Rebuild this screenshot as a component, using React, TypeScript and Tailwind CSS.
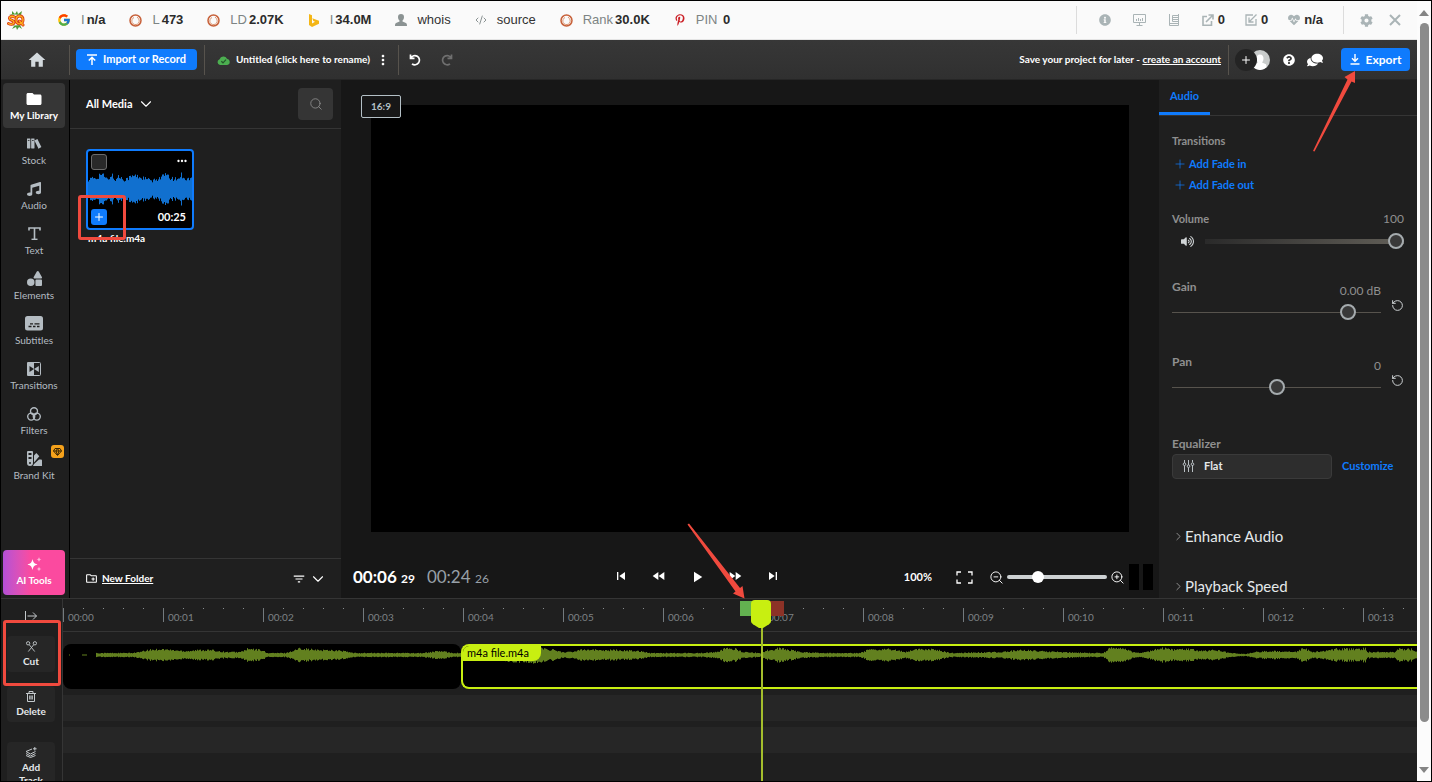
import clsx from 'clsx'
import {
  ChevronDown,
  ChevronRight,
  CodeXml,
  Plus,
  RotateCcw,
  Search,
  ZoomIn,
  ZoomOut,
} from 'lucide-react'
import { ReactNode, useState } from 'react'
import {
  FaCog,
  FaComments,
  FaHeartbeat,
  FaInfoCircle,
  FaMusic,
  FaPinterestP,
  FaQuestionCircle,
  FaShapes,
  FaVolumeUp,
} from 'react-icons/fa'
import { FcGoogle } from 'react-icons/fc'
import { ImBooks } from 'react-icons/im'
import {
  MdFastForward,
  MdFastRewind,
  MdFilterList,
  MdFolder,
  MdHome,
  MdMoreHoriz,
  MdMoreVert,
  MdOutlineCreateNewFolder,
  MdPlayArrow,
  MdSkipNext,
  MdSkipPrevious,
} from 'react-icons/md'

type IconProps = { className?: string }

/* ---------- icons ---------- */

const SeoLogo = () => (
  <svg viewBox="0 0 18 20" className="h-5 w-[18px]">
    <path
      d="M2 4l3 1 0-4 3 3 2-3 1 3 4-3-1 4zM3 16l4 0-2 3 4-2 1 3 2-3 3 2-2-4z"
      fill="#4f9a34"
    />
    <g fill="none" strokeLinecap="round">
      <path
        d="M7.500 7C5 5.500 2.200 6.500 2.500 8.500c.3 2 4.500 1.500 4.500 3.700 0 2-3 2.800-5.500 1.300M13 6c-3 0-4 2-4 4s1.500 3.800 3.500 3.800S16 12 16 10s-1-4-3-4zM12.500 11l3.500 4"
        stroke="#d93b16"
        strokeWidth="3"
      />
      <path
        d="M7.500 7C5 5.500 2.200 6.500 2.500 8.500c.3 2 4.500 1.500 4.500 3.700 0 2-3 2.800-5.500 1.300M13 6c-3 0-4 2-4 4s1.500 3.800 3.500 3.800S16 12 16 10s-1-4-3-4zM12.500 11l3.500 4"
        stroke="#ffb21c"
        strokeWidth="1.300"
      />
    </g>
  </svg>
)

const RingIcon = () => (
  <svg viewBox="0 0 13 13" className="size-[13px]" fill="none">
    <circle cx="6.500" cy="6.500" r="5.500" stroke="#c7613a" strokeWidth="1.500" />
    <path d="M5 3.500a3.700 3.700 0 1 0 4.500 1.200L8 3" stroke="#dd9672" strokeWidth="1" />
  </svg>
)

const BingIcon = () => (
  <svg viewBox="0 0 12 13" className="h-[13px] w-3">
    <path d="M1 0l3 1.200v8.300L7 7.800 5.300 7 4.300 4.300 11 6.700v3L4 13l-3-2z" fill="#f4b616" />
  </svg>
)

const PersonIcon = () => (
  <svg viewBox="0 0 12 12" className="size-3" fill="#8b9393">
    <path d="M6 0c2 0 3 1.300 3 3 0 1.600-.8 3-1.500 3.600v1L11 9c.7.400 1 1.300 1 3H0c0-1.700.3-2.600 1-3l3.500-1.400v-1C3.800 6 3 4.600 3 3c0-1.700 1-3 3-3z" />
  </svg>
)

const MonitorIcon = () => (
  <svg viewBox="0 0 13 12" className="h-3 w-[13px]" fill="none" stroke="#aab4b6">
    <path d="M.5.500h12v8H.5zM6.500 8.500v3M3.500 11.500h6M3.500 7V5M5.500 7V4M7.500 7V5M9.500 7V4" />
  </svg>
)

const ReportIcon = () => (
  <svg viewBox="0 0 12 12" className="size-3" fill="none" stroke="#aab4b6">
    <path d="M1.500 0v11.500h9V0M10 1.500H4.500v6H10M5 3.500h5M5 5.500h5M2 9.500h8" />
  </svg>
)

const OutLinkIcon = () => (
  <svg viewBox="0 0 12 12" className="size-3" fill="none" stroke="#aab4b6" strokeWidth="1.600">
    <path d="M5 2.500H1v8.700h8.500V7M4 8l6.500-6.500M6.500 1H11v4.500" />
  </svg>
)

const InLinkIcon = () => (
  <svg viewBox="0 0 12 12" className="size-3" fill="none" stroke="#aab4b6" strokeWidth="1.300">
    <path d="M8 1H1v10h10V5M11.500.500L4.500 7.500M4 3.500V8h4.500" />
  </svg>
)

const CloseIcon = () => (
  <svg viewBox="0 0 12 12" className="size-3" fill="none" stroke="#aab4b6" strokeWidth="2">
    <path d="M1 1l10 10M11 1L1 11" />
  </svg>
)

const ImportIcon = () => (
  <svg viewBox="0 0 10 11" className="h-[11px] w-[10px]" fill="none" stroke="white" strokeWidth="1.500">
    <path d="M0 1h10M5 11V4M1.800 6.500L5 3.300l3.200 3.200" />
  </svg>
)

const ExportIcon = () => (
  <svg viewBox="0 0 10 11" className="h-[11px] w-[10px]" fill="none" stroke="white" strokeWidth="1.400">
    <path d="M.5 10h9M5 0v7M2 4.300l3 3 3-3" />
  </svg>
)

const CloudIcon = () => (
  <svg viewBox="0 0 13 10" className="h-[10px] w-[13px] shrink-0">
    <path d="M3 10a3 3 0 0 1-.4-5.800A4 4 0 0 1 10 3.700 3.200 3.200 0 0 1 10.200 10z" fill="#4caf50" />
    <path d="M4.300 6.200l1.700 1.600 3-3.200" fill="none" stroke="#24572a" strokeWidth="1.200" />
  </svg>
)

const UndoIcon = ({ className }: IconProps) => (
  <svg viewBox="0 0 12 12" className={clsx('size-3', className)} fill="none" stroke="currentColor">
    <path d="M1.500.500v3.800h4M1.800 4A4.600 4.600 0 1 1 3 9.800" strokeWidth="1.700" />
  </svg>
)

const TextIcon = ({ className }: IconProps) => (
  <svg viewBox="0 0 15 15" className={className} fill="none" stroke="currentColor">
    <path d="M2 4.500V2h11v2.500M7.500 2v11" strokeWidth="1.600" />
    <path d="M4.500 13.300h6" strokeWidth="1.400" />
  </svg>
)

const SubtitlesIcon = ({ className }: IconProps) => (
  <svg viewBox="0 0 18 15" className={className}>
    <rect width="18" height="14.500" rx="2.500" fill="currentColor" />
    <path d="M3.500 10.500h3M8 10.500h2.500M12 10.500h2.500M5 7.800h3M9.500 7.800h5" stroke="#1f1f1f" strokeWidth="1.300" />
  </svg>
)

const TransitionsIcon = ({ className }: IconProps) => (
  <svg viewBox="0 0 14 14" className={className}>
    <path d="M0 1a1 1 0 0 1 1-1h6v14H1a1 1 0 0 1-1-1z" fill="currentColor" />
    <path d="M7 .500h5.500a1 1 0 0 1 1 1v11a1 1 0 0 1-1 1H7" fill="none" stroke="currentColor" />
    <path d="M2.500 4L7 7l-4.500 3z" fill="#1f1f1f" />
    <path d="M11.800 4L7 7l4.800 3z" fill="currentColor" />
  </svg>
)

const FiltersIcon = ({ className }: IconProps) => (
  <svg viewBox="0 0 14 14" className={className} fill="none" stroke="currentColor" strokeWidth="1.400">
    <circle cx="7" cy="4.300" r="3.500" />
    <circle cx="4.200" cy="9.600" r="3.500" />
    <circle cx="9.800" cy="9.600" r="3.500" />
  </svg>
)

const BrandKitIcon = ({ className }: IconProps) => (
  <svg viewBox="0 0 15 15" className={className} fill="currentColor">
    <path
      fillRule="evenodd"
      d="M1 0h4a1 1 0 0 1 1 1v11a2.500 2.500 0 0 1-6 0V1a1 1 0 0 1 1-1zm.500 2v2h3V2zm0 4v2h3V6zm1.500 5a1 1 0 1 0 0 2 1 1 0 0 0 0-2z"
    />
    <path d="M7 4.500L9.300 2l3 3.200L7 11.500zM7 13l5-4.500h2a1 1 0 0 1 1 1V15H6z" />
  </svg>
)

const SparkleIcon = ({ className }: IconProps) => (
  <svg viewBox="0 0 15 15" className={className} fill="white">
    <path d="M5.500 2c.9 3.600 1.500 4.400 5 5.500-3.500 1.100-4.100 1.900-5 5.500-.9-3.600-1.500-4.400-5-5.500 3.500-1.100 4.100-1.900 5-5.500z" />
    <path
      d="M12 0c.4 1.700.8 2.100 2.500 2.500-1.700.4-2.100.8-2.500 2.500-.4-1.700-.8-2.100-2.500-2.500C11.200 2.100 11.600 1.700 12 0zM12 9.500c.4 1.700.8 2.100 2.500 2.500-1.700.4-2.100.8-2.500 2.500-.4-1.700-.8-2.100-2.500-2.500 1.700-.4 2.100-.8 2.500-2.500z"
      opacity="0.600"
    />
  </svg>
)

const GemIcon = () => (
  <svg viewBox="0 0 9 8" className="h-2 w-[9px]" fill="none" stroke="#3b2500">
    <path d="M2 .500h5L8.500 3l-4 4.500-4-4.500zM.500 3h8M4.500.500L3 3l1.500 4L6 3z" />
  </svg>
)

const FullscreenIcon = () => (
  <svg viewBox="0 0 17 13" className="h-[13px] w-[17px]" fill="none" stroke="white" strokeWidth="1.300">
    <path d="M5 1H1v3.500M12 1h4v3.500M16 8.500V12h-4M5 12H1V8.500" />
  </svg>
)

const MixerIcon = ({ className }: IconProps) => (
  <svg viewBox="0 0 13 12" className={className} fill="none" stroke="#b9c0c4">
    <path d="M2.500 0v3M2.500 5.500V12M6.500 0v5M6.500 7.500V12M10.500 0v2.500M10.500 5V12" />
    <circle cx="2.500" cy="4.200" r="1.300" />
    <circle cx="6.500" cy="6.200" r="1.300" />
    <circle cx="10.500" cy="4.200" r="1.300" />
  </svg>
)

const ExpandIcon = () => (
  <svg viewBox="0 0 12 10" className="h-[10px] w-3" fill="none" stroke="#c4c9cc">
    <path d="M.5 0v10M2.500 5h9M8 1.500L11.500 5 8 8.500" />
  </svg>
)

const CutIcon = () => (
  <svg viewBox="0 0 12 12" className="size-[11px]" fill="none" stroke="#c4c9cc">
    <circle cx="2.300" cy="2.500" r="1.800" />
    <circle cx="9.700" cy="2.500" r="1.800" />
    <path d="M3.500 4l6 7.500M8.500 4l-6 7.500" />
  </svg>
)

const TrashIcon = () => (
  <svg viewBox="0 0 10 11" className="h-[11px] w-[10px]" fill="none" stroke="#c4c9cc">
    <path d="M0 2.500h10M3 2.500v-2h4v2M1.500 2.500v8h7v-8M3.700 4.500v4M5 4.500v4M6.300 4.500v4" />
  </svg>
)

const AddTrackIcon = () => (
  <svg viewBox="0 0 12 11" className="h-[11px] w-3" fill="none" stroke="#c4c9cc">
    <path d="M7 2L1 4.500 5.500 7l5-2.500M1 6.500L5.500 9l5-2.500M1 8.500l4.500 2 5-2M9.800 0v3.500M8 1.800h3.600" />
  </svg>
)

/* ---------- waveforms ---------- */

// [x, amplitude] pairs, straight lines in between
const TRACK_ENVELOPE = [
  [32, 0], [33, 2], [67, 2], [77, 3], [85, 5], [97, 6], [108, 5], [122, 4], [137, 5], [147, 5],
  [162, 3], [177, 3], [184, 6], [199, 5], [203, 2], [222, 2], [229, 4], [237, 7], [252, 5], [267, 5],
  [280, 4], [290, 2], [360, 2], [376, 4], [390, 2], [410, 2], [420, 3], [440, 6], [472, 8], [483, 6],
  [492, 5], [498, 3], [510, 3], [517, 6], [535, 5], [552, 5], [577, 4], [587, 2], [637, 2], [655, 3],
  [662, 7], [673, 6], [679, 3], [697, 2], [705, 5], [717, 7], [727, 5], [737, 3], [760, 2], [797, 2],
  [804, 5], [827, 6], [842, 3], [849, 5], [862, 6], [874, 5], [887, 2], [937, 3], [957, 5], [977, 4],
  [997, 3], [1027, 2], [1040, 2], [1047, 7], [1062, 6], [1069, 3], [1077, 2], [1087, 4], [1097, 7],
  [1112, 5], [1127, 6], [1137, 4], [1152, 5], [1167, 2], [1182, 1], [1192, 3], [1207, 4], [1232, 3],
  [1240, 7], [1249, 3], [1262, 4], [1272, 6], [1297, 6], [1302, 7], [1304, 3], [1332, 3], [1335, 6],
  [1349, 6], [1352, 3], [2400, 3],
]

const CARD_ENVELOPE = [
  [0, 10], [9, 12], [12, 16], [16, 13], [20, 9], [23, 16], [26, 9], [30, 13], [36, 10], [46, 14],
  [56, 11], [60, 10], [64, 8], [70, 11], [77, 15], [82, 11], [89, 10], [93, 15], [98, 10], [105, 12],
]

const amplitudeAt = (envelope: number[][], x: number) => {
  const next = envelope.findIndex((point) => point[0] > x)
  if (next <= 0) return 0
  const [x0, a0] = envelope[next - 1]
  const [x1, a1] = envelope[next]
  return a0 + ((a1 - a0) * (x - x0)) / (x1 - x0)
}

const noise = (x: number) => {
  const n = Math.sin(x * 127.1) * 43758.5453
  return n - Math.floor(n)
}

const wavePath = (envelope: number[][], from: number, to: number, mid: number) => {
  let d = ''
  for (let x = from; x < to; x++) {
    const amp = amplitudeAt(envelope, x) * (0.75 + noise(x) * 0.4)
    if (amp > 0) d += `M${x - from + 0.5} ${(mid - amp).toFixed(1)}v${(amp * 2).toFixed(1)}`
  }
  return d
}

/* ---------- browser extension bar ---------- */

interface StatProps {
  icon: ReactNode
  label?: string
  value?: string
  plain?: boolean
}

const Stat = ({ icon, label, value, plain }: StatProps) => (
  <a href="#" className="flex shrink-0 items-center gap-[10px] whitespace-nowrap">
    {icon}
    <span className="flex gap-[2px]">
      {label && <span className={plain ? 'text-[#333]' : 'text-[#7d8484]'}>{label}</span>}
      {value && <b className="text-[#2b2b2b]">{value}</b>}
    </span>
  </a>
)

const SeoBar = () => (
  <div className="flex h-[39px] shrink-0 items-center justify-between border-b border-[#e4e4e4] bg-[#fafafa] pr-4 pl-[6px] font-['Liberation_Sans',Arial,sans-serif] text-[13px]">
    <div className="flex items-center gap-6">
      <span className="mr-2">
        <SeoLogo />
      </span>
      <Stat icon={<FcGoogle size={14} />} label="I" value="n/a" />
      <Stat icon={<RingIcon />} label="L" value="473" />
      <Stat icon={<RingIcon />} label="LD" value="2.07K" />
      <Stat icon={<BingIcon />} label="I" value="34.0M" />
      <Stat icon={<PersonIcon />} label="whois" plain />
      <Stat icon={<CodeXml size={12} color="#8b9393" />} label="source" plain />
      <Stat icon={<RingIcon />} label="Rank" value="30.0K" />
      <Stat icon={<FaPinterestP size={12} color="#cb2027" />} label="PIN" value={'\u00a00'} />
    </div>
    <div className="flex items-center gap-[22px] font-bold text-[#2b2b2b]">
      <span className="h-7 w-px bg-[#dcdcdc]" />
      <button type="button" aria-label="Info">
        <FaInfoCircle size={12} color="#aab4b6" />
      </button>
      <button type="button" aria-label="Diagnosis">
        <MonitorIcon />
      </button>
      <button type="button" aria-label="Density">
        <ReportIcon />
      </button>
      <div className="flex items-center gap-5">
        <a href="#" className="flex items-center gap-1">
          <OutLinkIcon />0
        </a>
        <a href="#" className="flex items-center gap-1">
          <InLinkIcon />0
        </a>
        <a href="#" className="flex items-center gap-1">
          <FaHeartbeat size={12} color="#aab4b6" />
          n/a
        </a>
        <span className="h-7 w-px bg-[#dcdcdc]" />
      </div>
      <div className="-ml-[6px] flex items-center gap-4">
        <button type="button" aria-label="Settings">
          <FaCog size={13} color="#aab4b6" />
        </button>
        <button type="button" aria-label="Close">
          <CloseIcon />
        </button>
      </div>
    </div>
  </div>
)

/* ---------- editor toolbar ---------- */

const Divider = () => <span className="h-[30px] w-px shrink-0 bg-[#57534d]" />

const Toolbar = () => (
  <header className="flex h-10 shrink-0 items-center justify-between border-b border-[#262626] bg-linear-to-b from-[#373737] to-[#303030] pr-[7px] text-[10px] font-bold whitespace-nowrap text-white">
    <div className="flex items-center">
      <button type="button" aria-label="Home" className="flex w-[68px] justify-center pl-1">
        <MdHome size={20} color="#d3d9dd" />
      </button>
      <Divider />
      <button
        type="button"
        className="ml-[6px] flex h-[21px] w-[121px] items-center justify-center gap-[6px] rounded bg-[#0f7bfd] text-[11px]"
      >
        <ImportIcon />
        Import or Record
      </button>
      <span className="ml-[7px] flex">
        <Divider />
      </span>
      <button type="button" className="ml-3 flex w-[154px] items-center gap-[6px]">
        <CloudIcon />
        Untitled (click here to rename)
      </button>
      <button type="button" aria-label="More" className="ml-1">
        <MdMoreVert size={16} />
      </button>
      <span className="ml-[7px] flex">
        <Divider />
      </span>
      <button type="button" aria-label="Undo" className="ml-[10px]">
        <UndoIcon />
      </button>
      <button type="button" aria-label="Redo" className="ml-5 text-[#6f6f6f]">
        <UndoIcon className="-scale-x-100" />
      </button>
    </div>
    <div className="flex items-center">
      <span>
        Save your project for later -{' '}
        <a href="#" className="underline">
          create an account
        </a>
      </span>
      <span className="ml-[7px] flex">
        <Divider />
      </span>
      <button type="button" aria-label="Account" className="ml-[6px] flex items-center">
        <span className="z-10 flex size-[22px] items-center justify-center rounded-full bg-[#242424]">
          <Plus size={12} />
        </span>
        <svg viewBox="0 0 20 20" className="-ml-[7px] size-5">
          <circle cx="10" cy="10" r="10" fill="#c9cccb" />
          <path d="M10 4.500c2.500 0 3.500 1.800 3.500 4 0 2-.8 3.300-1.500 4l3.500 1.500c1 .5 1 1.800.9 3.600a10 10 0 0 1-12.800 0c0-1.800 0-3.100.9-3.600L8 12.500c-.7-.7-1.500-2-1.500-4 0-2.200 1-4 3.500-4z" fill="white" />
        </svg>
      </button>
      <button type="button" aria-label="Help" className="ml-[13px]">
        <FaQuestionCircle size={12} />
      </button>
      <button type="button" aria-label="Chat" className="ml-3">
        <FaComments size={16} className="-scale-x-100 rotate-0" />
      </button>
      <span className="relative ml-[18px]">
        <button
          type="button"
          className="flex h-[23px] w-[69px] items-center justify-center gap-[6px] rounded bg-[#0f7bfd] text-[12px]"
        >
          <ExportIcon />
          Export
        </button>
        <svg
          viewBox="0 0 44 82"
          className="pointer-events-none absolute top-[22px] -left-7 z-20 h-[82px] w-11"
          fill="#f04a3e"
        >
          <path d="M0 81L34.500 9.500 31.500 7 42 1v12l-3.500-1.500L1.500 81.500z" />
        </svg>
      </span>
    </div>
  </header>
)

/* ---------- left side ---------- */

const NAV_ITEMS = [
  { label: 'My Library', icon: <MdFolder size={18} /> },
  { label: 'Stock', icon: <ImBooks size={15} /> },
  { label: 'Audio', icon: <FaMusic size={14} /> },
  { label: 'Text', icon: <TextIcon className="size-[15px]" /> },
  { label: 'Elements', icon: <FaShapes size={15} /> },
  { label: 'Subtitles', icon: <SubtitlesIcon className="h-[15px] w-[18px]" /> },
  { label: 'Transitions', icon: <TransitionsIcon className="size-[14px]" /> },
  { label: 'Filters', icon: <FiltersIcon className="size-[14px]" /> },
  { label: 'Brand Kit', icon: <BrandKitIcon className="size-[15px]" />, premium: true },
]

const Sidebar = () => {
  const [active, setActive] = useState('My Library')

  return (
    <nav className="flex w-[69px] shrink-0 flex-col justify-between border-r border-black pt-[3px] pr-1 pb-[3px] pl-[2px] text-[10px]">
      <div>
        {NAV_ITEMS.map((item) => (
          <button
            key={item.label}
            type="button"
            onClick={() => setActive(item.label)}
            className={clsx(
              'relative flex h-[45px] w-full flex-col items-center justify-center rounded whitespace-nowrap',
              active === item.label
                ? 'bg-[#363636] font-bold text-white'
                : 'text-[#b4bcc2]'
            )}
          >
            <span className="flex h-[18px] items-center">{item.icon}</span>
            <span className="leading-[14px]">{item.label}</span>
            {item.premium && (
              <span className="absolute top-[2px] right-[1px] flex size-[13px] items-center justify-center rounded-[3px] bg-[#f6a21b]">
                <GemIcon />
              </span>
            )}
          </button>
        ))}
      </div>
      <button
        type="button"
        className="flex h-[45px] w-full flex-col items-center justify-center rounded bg-linear-to-r from-[#b44fd6] via-[#fb4a9f] via-45% to-[#fb4a9f] font-bold text-white"
      >
        <SparkleIcon className="size-[15px]" />
        <span className="leading-4">AI Tools</span>
      </button>
    </nav>
  )
}

const MediaCard = () => (
  <div className="w-[108px]">
    <div className="relative flex h-[81px] flex-col justify-between rounded border-2 border-[#0f7bfd] bg-black px-[3px] py-[3px]">
      <svg
        viewBox="0 0 104 34"
        preserveAspectRatio="none"
        className="absolute top-[21px] left-0 h-[34px] w-full"
        stroke="#1170cf"
      >
        <path d={wavePath(CARD_ENVELOPE, 0, 104, 17)} />
      </svg>
      <div className="flex items-start justify-between">
        <input
          type="checkbox"
          aria-label="Select m4a file.m4a"
          className="size-4 appearance-none rounded-[3px] border border-[#6b6b6b] bg-[#292929]"
        />
        <button type="button" aria-label="File menu">
          <MdMoreHoriz size={14} color="white" />
        </button>
      </div>
      <div className="relative flex items-center justify-between pr-[3px]">
        <button
          type="button"
          aria-label="Add to timeline"
          className="flex size-4 items-center justify-center rounded-[3px] bg-[#0f7bfd]"
        >
          <Plus size={12} color="white" />
        </button>
        <span className="text-[11px] font-bold text-white">00:25</span>
      </div>
      <span className="pointer-events-none absolute top-11 -left-[10px] h-[45px] w-12 rounded-[3px] border-3 border-[#f04a3e]" />
    </div>
    <p className="pl-[2px] text-[10px] leading-4 font-bold text-white">m4a file.m4a</p>
  </div>
)

const LibraryPanel = () => (
  <section className="flex w-[271px] shrink-0 flex-col text-white">
    <div className="flex h-[49px] items-center justify-between border-b border-[#353535] pr-2 pl-4">
      <button type="button" className="flex items-center gap-1 text-[11px] font-bold">
        All Media
        <ChevronDown size={18} strokeWidth={1.500} />
      </button>
      <button
        type="button"
        aria-label="Search"
        className="flex h-8 w-[35px] items-center justify-center rounded bg-[#353535] text-[#8b8b8b]"
      >
        <Search size={14} strokeWidth={1.500} />
      </button>
    </div>
    <div className="flex-1 px-4 pt-5">
      <MediaCard />
    </div>
    <div className="flex h-[40px] items-center justify-between border-t border-[#353535] pr-[14px] pl-[15px]">
      <button type="button" className="flex items-center gap-1 text-[10px] font-bold underline">
        <MdOutlineCreateNewFolder size={13} />
        New Folder
      </button>
      <div className="flex items-center gap-[3px]">
        <button type="button" aria-label="Sort">
          <MdFilterList size={14} />
        </button>
        <button type="button" aria-label="Expand">
          <ChevronDown size={18} strokeWidth={1.500} />
        </button>
      </div>
    </div>
  </section>
)

/* ---------- preview ---------- */

const TRANSPORT = [
  { label: 'Skip to start', icon: <MdSkipPrevious size={16} /> },
  { label: 'Rewind', icon: <MdFastRewind size={16} /> },
  { label: 'Play', icon: <MdPlayArrow size={18} /> },
  { label: 'Fast forward', icon: <MdFastForward size={16} /> },
  { label: 'Skip to end', icon: <MdSkipNext size={16} /> },
]

const Preview = () => {
  const [zoom, setZoom] = useState(28)

  return (
    <main className="relative flex min-w-0 flex-1 flex-col bg-[#171717] text-white">
      <div className="mx-[30px] mt-[25px] flex-1 bg-black" />
      <button
        type="button"
        className="absolute top-[15px] left-5 h-[23px] w-10 rounded-[2px] border border-[#b4c0c6] bg-[#171717] text-[10px] font-bold text-[#b4c0c6]"
      >
        16:9
      </button>
      <div className="grid h-[66px] shrink-0 grid-cols-[1fr_auto_1fr] items-center pt-6 whitespace-nowrap">
        <div className="flex items-baseline gap-3 pl-3 text-[17px]">
          <span className="font-bold">
            00:06 <span className="text-[12px]">29</span>
          </span>
          <span className="text-[#98a0a8]">
            00:24 <span className="text-[12px]">26</span>
          </span>
        </div>
        <div className="mr-[106px] flex">
          {TRANSPORT.map((item) => (
            <button
              key={item.label}
              type="button"
              aria-label={item.label}
              className="flex w-[38px] justify-center"
            >
              {item.icon}
            </button>
          ))}
        </div>
        <div className="flex items-center justify-end pr-[6px]">
          <span className="text-[11px] font-bold">100%</span>
          <button type="button" aria-label="Fullscreen" className="ml-6">
            <FullscreenIcon />
          </button>
          <button type="button" aria-label="Zoom out" className="ml-4">
            <ZoomOut size={15} strokeWidth={1.500} />
          </button>
          <input
            type="range"
            aria-label="Timeline zoom"
            value={zoom}
            onChange={(e) => setZoom(Number(e.target.value))}
            className="mx-[3px] h-1 w-[100px] appearance-none rounded-full bg-[#cdd1d3] [&::-webkit-slider-thumb]:size-3 [&::-webkit-slider-thumb]:appearance-none [&::-webkit-slider-thumb]:rounded-full [&::-webkit-slider-thumb]:bg-white"
          />
          <button type="button" aria-label="Zoom in">
            <ZoomIn size={15} strokeWidth={1.500} />
          </button>
          <span className="ml-1 h-[26px] w-[10px] bg-black" />
          <span className="ml-1 h-[26px] w-[10px] bg-black" />
        </div>
      </div>
    </main>
  )
}

/* ---------- properties panel ---------- */

const THUMB =
  '[&::-webkit-slider-thumb]:size-4 [&::-webkit-slider-thumb]:appearance-none [&::-webkit-slider-thumb]:rounded-full [&::-webkit-slider-thumb]:border-2 [&::-webkit-slider-thumb]:border-[#a5abae] [&::-webkit-slider-thumb]:bg-[#393939]'

interface LevelProps {
  id: string
  label: string
  text: string
  initial: number
}

const Level = ({ id, label, text, initial }: LevelProps) => {
  const [level, setLevel] = useState(initial)

  return (
    <div className="flex items-start gap-[10px]">
      <div className="flex flex-1 flex-col">
        <div className="flex h-5 justify-between leading-4">
          <label htmlFor={id} className="font-bold">
            {label}
          </label>
          <span className="self-end">{text}</span>
        </div>
        <input
          id={id}
          type="range"
          value={level}
          onChange={(e) => setLevel(Number(e.target.value))}
          className={clsx(
            'mt-[5px] h-4 w-full appearance-none bg-[linear-gradient(#57534d,#57534d)] bg-[length:100%_1px] bg-center bg-no-repeat',
            THUMB
          )}
        />
      </div>
      <button
        type="button"
        aria-label={`Reset ${label}`}
        onClick={() => setLevel(initial)}
        className="mt-5 text-[#d0d4d6]"
      >
        <RotateCcw size={13} strokeWidth={1.800} />
      </button>
    </div>
  )
}

const PropertiesPanel = () => {
  const [volume, setVolume] = useState(100)

  return (
    <aside className="flex w-[258px] shrink-0 flex-col overflow-hidden bg-[#1f1f1f] text-[12px] whitespace-nowrap text-[#8f8f8f]">
      <div className="flex h-9 shrink-0 border-b border-[#353535] text-[11px] font-bold text-[#0f7bfd]">
        <button type="button" className="h-[35px] w-[51px] border-b-3 border-[#0f7bfd]">
          Audio
        </button>
      </div>
      <div className="px-[13px] pt-[17px]">
        <h2 className="text-[11px] leading-4 font-bold">Transitions</h2>
        <div className="mt-1 flex flex-col items-start pl-px text-[11px] leading-[21px] font-bold text-[#0f7bfd]">
          <button type="button" className="flex items-center gap-[2px]">
            <Plus size={14} strokeWidth={1.200} />
            Add Fade in
          </button>
          <button type="button" className="flex items-center gap-[2px]">
            <Plus size={14} strokeWidth={1.200} />
            Add Fade out
          </button>
        </div>

        <div className="mt-4 flex justify-between leading-4">
          <label htmlFor="volume" className="text-[11px] font-bold">
            Volume
          </label>
          <span>100</span>
        </div>
        <div className="mt-[6px] flex items-center gap-[11px] pl-[9px]">
          <FaVolumeUp size={13} color="#d0d4d6" className="shrink-0" />
          <input
            id="volume"
            type="range"
            value={volume}
            onChange={(e) => setVolume(Number(e.target.value))}
            className={clsx(
              'h-4 min-w-0 flex-1 appearance-none bg-[linear-gradient(90deg,#2a2a2a,#625f58)] bg-[length:100%_5px] bg-center bg-no-repeat',
              THUMB
            )}
          />
        </div>

        <div className="mt-[30px]">
          <Level id="gain" label="Gain" text="0.00 dB" initial={87} />
        </div>
        <div className="mt-[34px]">
          <Level id="pan" label="Pan" text="0" initial={50} />
        </div>

        <label htmlFor="equalizer" className="mt-[41px] block leading-4 font-bold">
          Equalizer
        </label>
        <div className="mt-[2px] flex items-center gap-[10px] text-[11px] font-bold">
          <div className="relative">
            <MixerIcon className="pointer-events-none absolute top-[6px] left-[10px] h-3 w-[13px]" />
            <select
              id="equalizer"
              className="h-[25px] w-40 appearance-none rounded border border-[#3a3a3a] bg-[#2d2d2d] pl-[31px] text-[#e4e8ea]"
            >
              <option>Flat</option>
            </select>
          </div>
          <a href="#" className="text-[#0f7bfd]">
            Customize
          </a>
        </div>

        <button type="button" className="mt-[47px] flex items-center text-[15px] leading-5 text-[#e4e8ea]">
          <ChevronRight size={13} strokeWidth={1.500} color="#a5a5a5" />
          Enhance Audio
        </button>
        <button type="button" className="mt-[30px] flex items-center text-[15px] leading-5 text-[#e4e8ea]">
          <ChevronRight size={13} strokeWidth={1.500} color="#a5a5a5" />
          Playback Speed
        </button>
      </div>
    </aside>
  )
}

/* ---------- timeline ---------- */

const Ruler = () => {
  // one mark per 100px of window
  const [seconds] = useState(() => Math.floor(window.innerWidth / 100))

  return (
    <div className="flex h-[33px] overflow-hidden border-b border-[#353535] pt-[9px]">
      {Array.from({ length: seconds }, (_, second) => (
        <div key={second} className="h-[14px] w-[100px] shrink-0 border-l border-[#747a7e]">
          <div className="flex h-px justify-evenly">
            {[20, 40, 60, 80].map((dot) => (
              <span key={dot} className="w-px bg-[#8a8f92]" />
            ))}
          </div>
          <span className="block pl-1 text-[10px] leading-4 text-[#7d8285]">
            00:{String(second).padStart(2, '0')}
          </span>
        </div>
      ))}
    </div>
  )
}

interface ToolProps {
  icon: ReactNode
  children: ReactNode
}

const Tool = ({ icon, children }: ToolProps) => (
  <button
    type="button"
    className="flex w-12 flex-col items-center gap-[3px] rounded bg-[#262626] pt-[5px] pb-1 text-[10px] leading-[13px] font-bold text-[#e4e8ea]"
  >
    {icon}
    {children}
  </button>
)

const Playhead = () => (
  <div className="pointer-events-none absolute top-[2px] bottom-0 left-[677px] flex w-11 flex-col">
    <div className="flex h-[15px] shrink-0">
      <span className="w-[22px] bg-[#63b150]" />
      <span className="w-[22px] bg-[#8c3227]" />
    </div>
    <svg viewBox="0 0 20 28" className="absolute -top-px left-[11px] h-7 w-5" fill="#c8ef11">
      <path d="M4 0h12a4 4 0 0 1 4 4v17c0 1.500-1 2.500-2 3.200L12 28H8l-6-3.800C1 23.500 0 22.500 0 21V4a4 4 0 0 1 4-4z" />
    </svg>
    <span className="ml-[21px] w-[2px] flex-1 bg-[#a4be2c]" />
    <svg
      viewBox="0 0 58 78"
      className="absolute -top-[78px] -left-[53px] h-[78px] w-[58px]"
      fill="#f04a3e"
    >
      <path d="M.5 1.500L48.500 68.500 46 70.500 57.500 75.500 55.500 63 53 65 2 .500z" />
    </svg>
  </div>
)

const Timeline = () => (
  <section className="flex h-[183px] shrink-0 border-t border-[#353535] bg-[#1f1f1f]">
    <div className="relative flex w-[62px] shrink-0 flex-col items-center overflow-hidden border-r border-[#353535] pt-3 pr-px">
      <button type="button" aria-label="Expand tools" className="flex">
        <ExpandIcon />
      </button>
      <div className="mt-[15px]">
        <Tool icon={<CutIcon />}>Cut</Tool>
      </div>
      <div className="mt-[14px]">
        <Tool icon={<TrashIcon />}>Delete</Tool>
      </div>
      <div className="mt-5">
        <Tool icon={<AddTrackIcon />}>
          <span>
            Add
            <br />
            Track
          </span>
        </Tool>
      </div>
      <span className="pointer-events-none absolute top-[21px] left-[2px] h-[66px] w-[58px] rounded-[3px] border-3 border-[#f04a3e]" />
    </div>
    <div className="relative min-w-0 flex-1">
      <Ruler />
      <div className="mt-3 flex h-[45px]">
        <div className="w-[398px] shrink-0 overflow-hidden rounded-lg bg-black">
          <svg className="h-full w-[398px]" stroke="#62801f">
            <path d={wavePath(TRACK_ENVELOPE, 0, 398, 11)} />
            <path d="M6 11h1M19 11h5" />
          </svg>
        </div>
        <div className="relative flex-1 overflow-hidden rounded-l-lg border-2 border-r-0 border-[#c8ef11] bg-black">
          <svg className="h-full w-[2000px]" stroke="#62801f">
            <path d={wavePath(TRACK_ENVELOPE, 400, 2400, 9)} />
          </svg>
          <span className="absolute top-0 left-0 h-[15px] w-[78px] rounded-br-lg bg-[#c8ef11] pl-1 text-[11px] leading-[13px] text-black">
            m4a file.m4a
          </span>
        </div>
      </div>
      <div className="mt-[6px] h-[26px] bg-[#262626]" />
      <div className="mt-[6px] h-[26px] bg-[#262626]" />
      <Playhead />
    </div>
  </section>
)

const Scrollbar = () => (
  <div className="flex w-[14px] shrink-0 flex-col items-center bg-[#fcfcfc] pt-[9px] pb-2">
    <svg viewBox="0 0 10 6" className="h-[6px] w-[10px]" fill="#858585">
      <path d="M5 0l5 6H0z" />
    </svg>
    <div className="mt-[7px] flex w-[9px] flex-1 flex-col">
      <div className="h-[94%] rounded-full bg-[#8b8b8b]" />
    </div>
    <svg viewBox="0 0 10 6" className="h-[6px] w-[10px]" fill="#858585">
      <path d="M5 6l5-6H0z" />
    </svg>
  </div>
)

export default function App() {
  return (
    <div className="flex h-screen border border-black bg-[#1f1f1f] font-[Lato,'Noto_Sans',sans-serif]">
      <div className="flex min-w-0 flex-1 flex-col">
        <SeoBar />
        <Toolbar />
        <div className="flex min-h-0 flex-1">
          <Sidebar />
          <LibraryPanel />
          <Preview />
          <PropertiesPanel />
        </div>
        <Timeline />
      </div>
      <Scrollbar />
    </div>
  )
}
